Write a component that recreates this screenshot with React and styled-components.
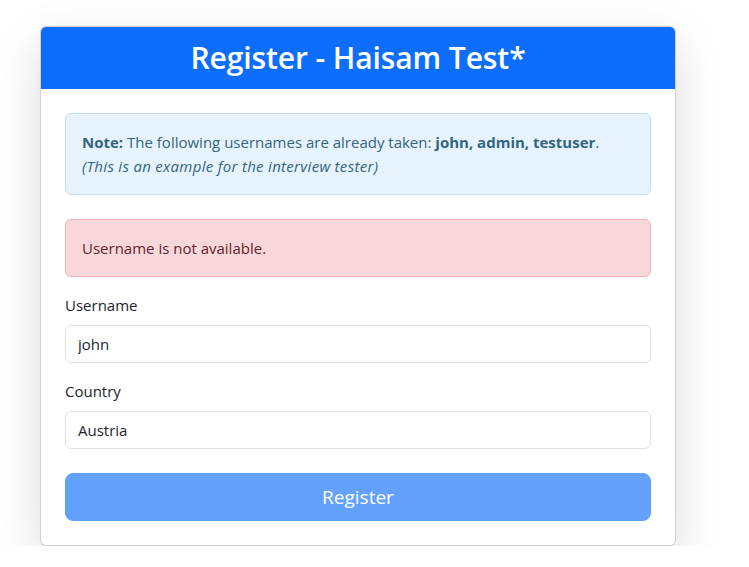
import React from "react";
import styled, { createGlobalStyle } from "styled-components";

const Global = createGlobalStyle`
  * { box-sizing: border-box; }
  body {
    margin: 0;
    background: #fff;
    font-family: "Open Sans", "Liberation Sans", Arial, sans-serif;
    font-size: 15px;
    line-height: 24px;
    color: #212529;
  }
`;

const Page = styled.div`
  padding: 26px 0 0 40px;
`;

const Card = styled.div`
  width: 636px;
  background: #fff;
  border: 1px solid rgba(0, 0, 0, 0.175);
  border-radius: 6px;
  box-shadow: 0 16px 48px rgba(0, 0, 0, 0.14);
  overflow: hidden;
`;

const Header = styled.div`
  background: #0d6efd;
  height: 62px;
  display: flex;
  align-items: center;
  justify-content: center;
`;

const Title = styled.h1`
  margin: 0;
  color: #fff;
  font-size: 30px;
  font-weight: 600;
  line-height: 1.2;
  letter-spacing: -0.1px;
`;

const Body = styled.div`
  padding: 24px;
  display: flex;
  flex-direction: column;
`;

const Alert = styled.div`
  padding: 16px;
  border-radius: 6px;
  border: 1px solid ${(p) => (p.$kind === "danger" ? "#f1b0b7" : "#bfe0f2")};
  background: ${(p) => (p.$kind === "danger" ? "#f8d7da" : "#e6f3fd")};
  color: ${(p) => (p.$kind === "danger" ? "#62262b" : "#33657f")};
  margin-bottom: ${(p) => p.$mb}px;
  b { font-weight: 700; }
  i { font-style: italic; letter-spacing: 0.3px; }
`;

const Label = styled.label`
  display: block;
  margin-bottom: 8px;
`;

const Field = styled.div`
  margin-bottom: ${(p) => p.$mb}px;
`;

const Input = styled.input`
  display: block;
  width: 100%;
  height: 38px;
  padding: 6px 12px;
  font: inherit;
  color: #212529;
  border: 1px solid #dee2e6;
  border-radius: 6px;
  background: #fff;
  outline: none;
`;

const Button = styled.button`
  display: block;
  width: 100%;
  height: 48px;
  font: inherit;
  font-size: 19px;
  color: #fff;
  background: #62a1fe;
  border: 1px solid #62a1fe;
  border-radius: 8px;
`;

export default function App() {
  return (
    <>
      <Global />
      <Page>
        <Card>
          <Header>
            <Title>Register - Haisam Test*</Title>
          </Header>
          <Body>
            <Alert $mb={24}>
              <b>Note:</b> The following usernames are already taken:{" "}
              <b>john, admin, testuser</b>.
              <br />
              <i>(This is an example for the interview tester)</i>
            </Alert>
            <Alert $kind="danger" $mb={16}>
              Username is not available.
            </Alert>
            <Field $mb={16}>
              <Label>Username</Label>
              <Input defaultValue="john" />
            </Field>
            <Field $mb={24}>
              <Label>Country</Label>
              <Input defaultValue="Austria" />
            </Field>
            <Button disabled>Register</Button>
          </Body>
        </Card>
      </Page>
    </>
  );
}
